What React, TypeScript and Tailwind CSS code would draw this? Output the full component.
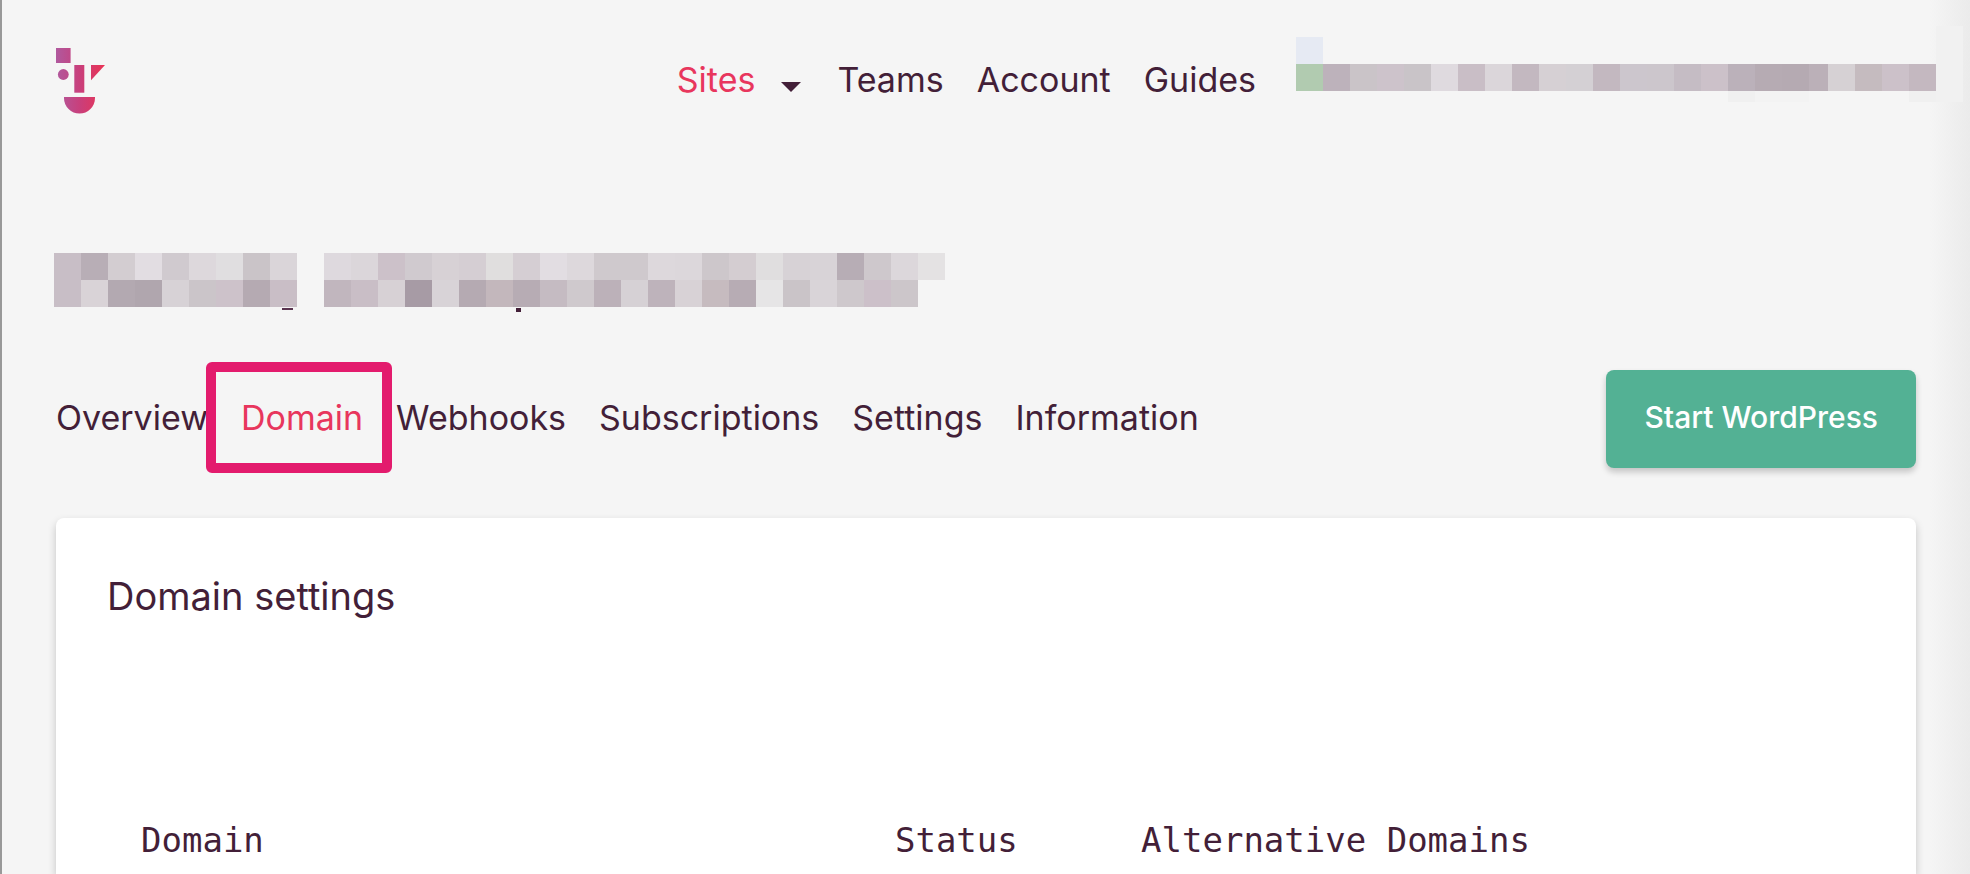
import React from 'react';

interface NavLinkProps {
  label: string;
  active?: boolean;
  highlighted?: boolean;
}

interface MosaicRow {
  x: number;
  y: number;
  colors: string[];
}

const TILE = 27;

const titleRows: MosaicRow[] = [
  { x: 0, y: 0, colors: ['#c8bec6', '#b8aeb6', '#d3cdd1', '#e2dde2', '#d0cacf', '#ddd8dc', '#e0dee0', '#cac4c8', '#dad5d9'] },
  { x: 0, y: 27, colors: ['#c8bec6', '#d9d3d7', '#b3a9b1', '#b0a6ae', '#d7d2d6', '#cbc5c9', '#cdc2ca', '#b5aab2', '#c9bec6'] },
  {
    x: 270,
    y: 0,
    colors: [
      '#ded9de', '#dbd6da', '#ccc1c9', '#d0cacf', '#d7d1d5', '#d5ced3', '#e0dede', '#d5ced3',
      '#e2dde2', '#ddd8dc', '#cfc9cd', '#cfc9cd', '#ddd8dc', '#dcd7db', '#cdc7cb', '#d4cdd1',
      '#e0dedf', '#d7d2d6', '#d8d3d7', '#b7adb5', '#cec8cc', '#dcd7db', '#e4e2e3',
    ],
  },
  {
    x: 270,
    y: 27,
    colors: [
      '#c1b6be', '#c9bec6', '#d7d1d5', '#a79ba5', '#d8d3d7', '#b5aab2', '#c3b7bc', '#b7acb4',
      '#c5bbc2', '#cfc9cd', '#bcb1b9', '#d6d1d5', '#beb3bb', '#d8d2d6', '#c6bbbf', '#b7acb4',
      '#e6e5e6', '#cac4c8', '#d9d4d8', '#cec8cc', '#ccc0c9', '#ccc6ca',
    ],
  },
];

const userRows: MosaicRow[] = [
  { x: 0, y: 11, colors: ['#e6eaf3'] },
  {
    x: 0,
    y: 38,
    colors: [
      '#b1cbb0', '#bdb2bb', '#cac4c8', '#cdc3cb', '#c9c4c8', '#dfdadf', '#c9bec6', '#dbd6da',
      '#c3b8c0', '#d6d0d4', '#d4d0d4', '#c3b8c0', '#ccc6cd', '#ccc6cc', '#c5bcc4', '#ccc1c9',
      '#bbb1ba', '#b6abb3', '#b5aab2', '#bbb0b8',
    ],
  },
  { x: 532, y: 38, colors: ['#d6d1d4', '#c5bbbf', '#ccc1c9', '#c4b8c0'] },
];

const Tiles: React.FC<{ rows: MosaicRow[] }> = ({ rows }) => (
  <>
    {rows.map((row) =>
      row.colors.map((color, i) => (
        <rect key={`${row.x}-${row.y}-${i}`} x={row.x + i * TILE} y={row.y} width={TILE} height={TILE} fill={color} />
      )),
    )}
  </>
);

const Logo: React.FC = () => (
  <svg width="50" height="66" viewBox="0 0 50 66" aria-hidden="true">
    <defs>
      <linearGradient id="logo" gradientUnits="userSpaceOnUse" x1="0" y1="0" x2="48" y2="0">
        <stop offset="0" stopColor="#b0599e" />
        <stop offset="0.5" stopColor="#c93f7b" />
        <stop offset="1" stopColor="#e93355" />
      </linearGradient>
    </defs>
    <g fill="url(#logo)">
      <rect width="14.6" height="15" />
      <circle cx="7.3" cy="26.5" r="5.4" />
      <rect x="18.3" y="17" width="10" height="27.7" />
      <path d="M35 17h14L35 32.3z" />
      <path d="M8 49h31v1a15.5 15.5 0 0 1-31 0z" />
    </g>
  </svg>
);

const NavLink: React.FC<NavLinkProps> = ({ label, active, highlighted }) => (
  <a href="#" className={`relative ${active ? 'text-[#e8365d]' : 'text-[#431f38]'}`}>
    {label}
    {highlighted && (
      <span className="absolute -top-[36px] -right-[29px] -left-[35px] h-[111px] rounded-md border-10 border-[#e31b6d]" />
    )}
  </a>
);

const App: React.FC = () => {
  return (
    <div className="relative flex min-h-screen flex-col overflow-hidden border-l-2 border-[#999999] bg-[#f5f5f5] font-['Inter',sans-serif] text-[34px] leading-[40px] text-[#431f38]">
      <div className="absolute inset-y-0 right-0 w-10 bg-linear-to-r from-transparent to-[#ebebeb]" />

      <header className="relative flex items-start justify-between pt-[26px] pr-[7px] pl-[54px]">
        <a href="#" aria-label="Home" className="mt-[22px]">
          <Logo />
        </a>
        <div className="flex items-start">
          <nav className="mt-[34px] mr-[40px] flex items-center gap-[33px]">
            <div className="flex items-center gap-[26px]">
              <NavLink label="Sites" active />
              <button type="button" aria-label="Choose a site" className="pt-[14px] pr-[3px]">
                <svg width="20" height="10" viewBox="0 0 20 10">
                  <path d="M0 0h20L10 10z" fill="#431f38" />
                </svg>
              </button>
            </div>
            <NavLink label="Teams" />
            <NavLink label="Account" />
            <NavLink label="Guides" />
          </nav>
          <svg width="667" height="76" viewBox="0 0 667 76" aria-hidden="true">
            <rect x="640" y="0" width="27" height="76" fill="#f1f1f1" />
            <rect x="432" y="65" width="27" height="11" fill="#f0f0f0" />
            <rect x="459" y="65" width="54" height="11" fill="#f3f3f3" />
            <rect x="613" y="65" width="27" height="11" fill="#f0f0f0" />
            <Tiles rows={userRows} />
          </svg>
        </div>
      </header>

      <main className="relative flex flex-1 flex-col px-[54px]">
        <svg width="891" height="60" viewBox="0 0 891 60" className="mt-[139px] -ml-[2px]" aria-hidden="true">
          <Tiles rows={titleRows} />
          <rect x="228" y="55" width="11" height="2" fill="#5a3550" />
          <rect x="462" y="55" width="5" height="4" fill="#431f38" />
        </svg>

        <div className="mt-[57px] flex items-center justify-between">
          <nav className="flex gap-[33px] pb-[2px]">
            <NavLink label="Overview" />
            <NavLink label="Domain" active highlighted />
            <NavLink label="Webhooks" />
            <NavLink label="Subscriptions" />
            <NavLink label="Settings" />
            <NavLink label="Information" />
          </nav>
          <button
            type="button"
            className="h-[98px] rounded-lg bg-[#53b194] px-[38px] pb-[4px] text-[30px] font-medium text-white shadow-[0_4px_6px_rgba(0,0,0,0.2)]"
          >
            Start WordPress
          </button>
        </div>

        <section className="mt-[50px] flex-1 rounded-t-lg bg-white px-[51px] pt-[58px] shadow-[0_4px_8px_rgba(0,0,0,0.2)]">
          <h2 className="text-[38px]">Domain settings</h2>
          <table className="mt-[204px] w-full table-fixed text-left font-['DejaVu_Sans_Mono',monospace]">
            <thead>
              <tr>
                <th scope="col" className="w-[43%] pl-[34px] font-normal">Domain</th>
                <th scope="col" className="w-[14%] pl-[32px] font-normal">Status</th>
                <th scope="col" className="pl-[32px] font-normal">Alternative Domains</th>
              </tr>
            </thead>
          </table>
        </section>
      </main>
    </div>
  );
};

export default App;
